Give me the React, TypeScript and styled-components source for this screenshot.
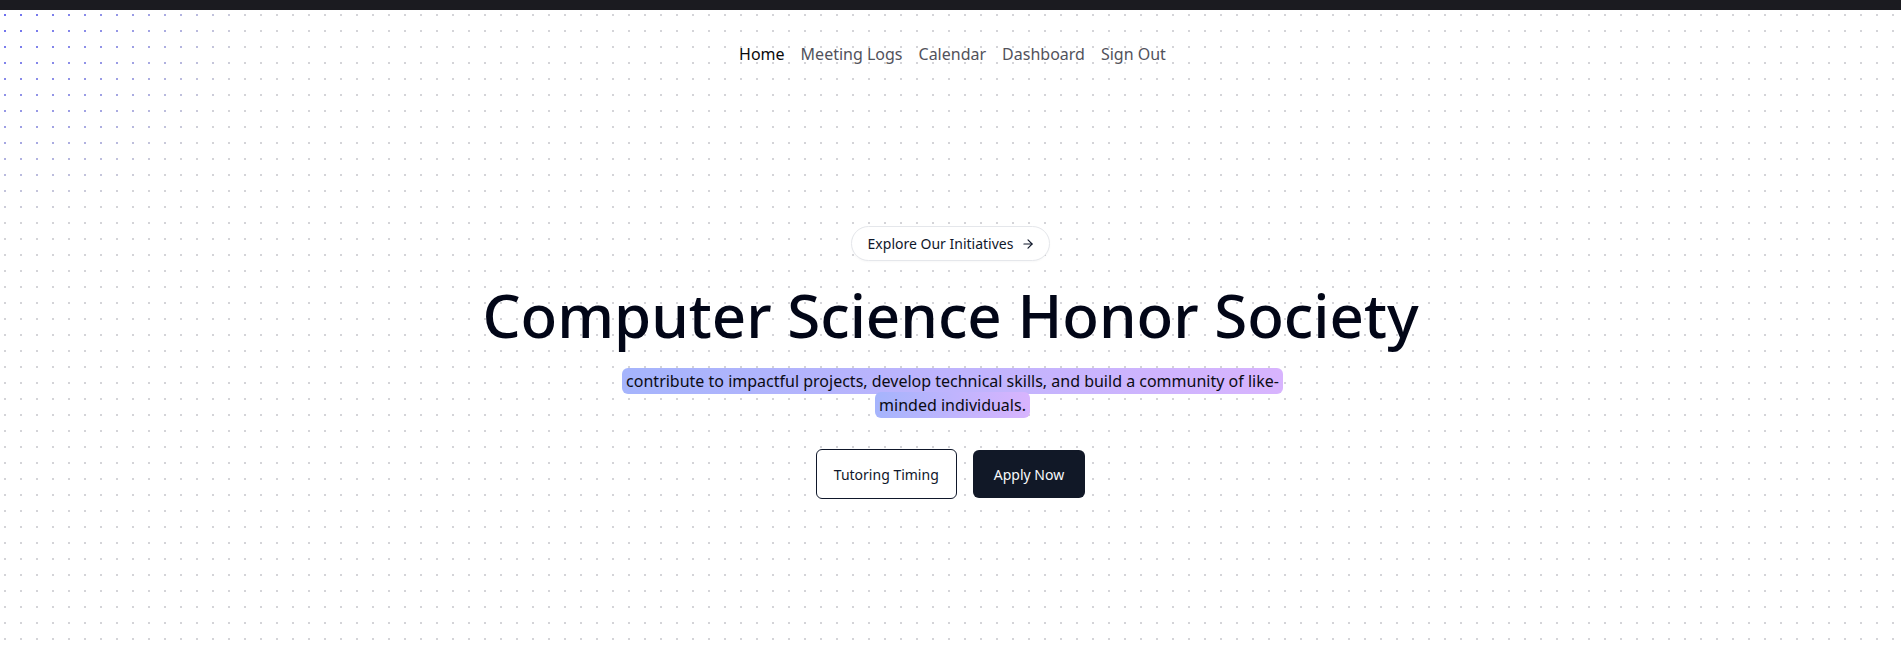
import styled, { createGlobalStyle } from "styled-components";
import { ArrowRight } from "lucide-react";

const GlobalStyle = createGlobalStyle`
  html, body {
    margin: 0;
    padding: 0;
    background: #ffffff;
  }
  body {
    font-family: "Noto Sans", "Open Sans", sans-serif;
    color: #020617;
  }
`;

const TopBar = styled.div`
  height: 10px;
  background-color: #1b1b20;
`;

const Page = styled.div`
  position: relative;
  min-height: 642px;
  overflow: hidden;
`;

const Backdrop = styled.svg`
  position: absolute;
  inset: 0;
  width: 100%;
  height: 100%;
  pointer-events: none;
`;

const Content = styled.div`
  position: relative;
  display: flex;
  flex-direction: column;
  align-items: center;
`;

const Nav = styled.nav`
  display: flex;
  align-items: center;
  gap: 16px;
  padding-top: 32px;
  margin-left: 4px;
`;

const NavLink = styled.a<{ $active?: boolean }>`
  font-size: 16px;
  line-height: 24px;
  color: ${(p) => (p.$active ? "#09090b" : "#52525b")};
  text-decoration: none;
  cursor: pointer;
`;

const Hero = styled.section`
  display: flex;
  flex-direction: column;
  align-items: center;
  padding-top: 160px;
`;

const Badge = styled.a`
  display: inline-flex;
  align-items: center;
  gap: 8px;
  height: 35px;
  box-sizing: border-box;
  padding: 0 14px 0 16px;
  border: 1px solid #e5e7eb;
  border-radius: 999px;
  background: #ffffff;
  font-size: 14px;
  color: #0f172a;
  box-shadow: 0 1px 2px rgba(0, 0, 0, 0.03);
`;

const Title = styled.h1`
  margin: 24px 0 0;
  font-size: 60px;
  line-height: 60px;
  font-weight: 500;
  color: #020617;
`;

const Lead = styled.p`
  margin: 24px 0 0 4px;
  max-width: 672px;
  text-align: center;
  font-size: 16px;
  line-height: 24px;
`;

const Highlight = styled.span`
  padding: 2px 4px;
  border-radius: 6px;
  background-image: linear-gradient(90deg, #a5b4fc, #d8b4fe);
  box-decoration-break: clone;
  -webkit-box-decoration-break: clone;
  color: #0b0b14;
`;

const Actions = styled.div`
  display: flex;
  align-items: center;
  gap: 16px;
  margin-top: 32px;
`;

const Button = styled.button<{ $variant: "outline" | "solid" }>`
  height: ${(p) => (p.$variant === "outline" ? "50px" : "48px")};
  padding: 0 ${(p) => (p.$variant === "outline" ? "17px" : "21px")};
  border-radius: 6px;
  font-family: inherit;
  font-size: 14px;
  cursor: pointer;
  border: ${(p) => (p.$variant === "outline" ? "1px solid #0f172a" : "none")};
  background: ${(p) => (p.$variant === "outline" ? "#ffffff" : "#111827")};
  color: ${(p) => (p.$variant === "outline" ? "#0f172a" : "#f8fafc")};
`;

function DotField() {
  return (
    <Backdrop>
      <defs>
        <pattern id="dots-gray" x="0" y="-10" width="16" height="16" patternUnits="userSpaceOnUse">
          <rect x="4" y="14" width="2" height="2" fill="#d4d4d8" />
        </pattern>
        <pattern id="dots-blue" x="0" y="-10" width="16" height="16" patternUnits="userSpaceOnUse">
          <rect x="4" y="14" width="2" height="2" fill="#6366f1" />
        </pattern>
        <radialGradient id="glow" cx="0" cy="0" r="1" gradientUnits="userSpaceOnUse" gradientTransform="scale(250 210)">
          <stop offset="0" stopColor="#fff" stopOpacity="0.95" />
          <stop offset="0.55" stopColor="#fff" stopOpacity="0.5" />
          <stop offset="1" stopColor="#fff" stopOpacity="0" />
        </radialGradient>
        <mask id="glow-mask">
          <rect width="100%" height="100%" fill="url(#glow)" />
        </mask>
      </defs>
      <rect width="100%" height="100%" fill="url(#dots-gray)" />
      <rect width="100%" height="100%" fill="url(#dots-blue)" mask="url(#glow-mask)" />
    </Backdrop>
  );
}

export default function App() {
  return (
    <>
      <GlobalStyle />
      <TopBar />
      <Page>
        <DotField />
        <Content>
          <Nav>
            <NavLink $active>Home</NavLink>
            <NavLink>Meeting Logs</NavLink>
            <NavLink>Calendar</NavLink>
            <NavLink>Dashboard</NavLink>
            <NavLink>Sign Out</NavLink>
          </Nav>
          <Hero>
            <Badge>
              Explore Our Initiatives
              <ArrowRight size={14} strokeWidth={2} />
            </Badge>
            <Title>Computer Science Honor Society</Title>
            <Lead>
              <Highlight>
                contribute to impactful projects, develop technical skills, and
                build a community of like-minded individuals.
              </Highlight>
            </Lead>
            <Actions>
              <Button $variant="outline">Tutoring Timing</Button>
              <Button $variant="solid">Apply Now</Button>
            </Actions>
          </Hero>
        </Content>
      </Page>
    </>
  );
}
